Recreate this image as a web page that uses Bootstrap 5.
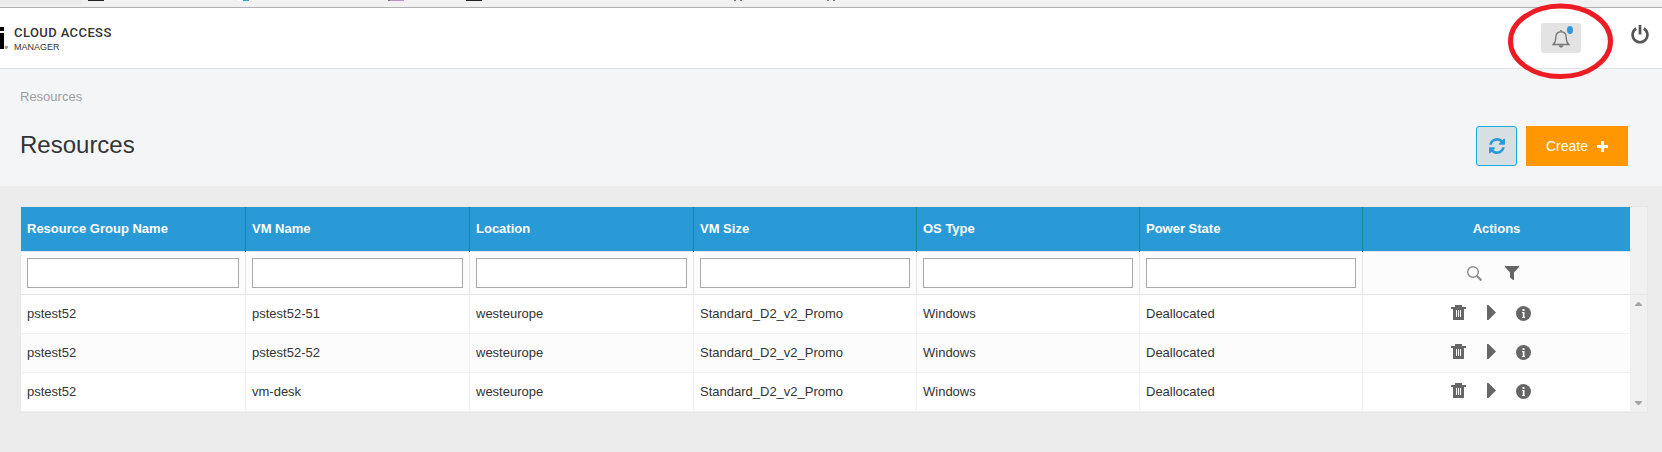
<!DOCTYPE html>
<html lang="en">
<head>
<meta charset="utf-8">
<title>Cloud Access Manager - Resources</title>
<meta name="viewport" content="width=device-width, initial-scale=1">
<link href="https://cdn.jsdelivr.net/npm/bootstrap@5.3.0/dist/css/bootstrap.min.css" rel="stylesheet">
<style>
body{font-family:"Liberation Sans",Arial,sans-serif;font-size:13px;line-height:18px;color:#333;background:#ececec;overflow:hidden}
svg{display:block;flex:none}
.browser-edge{height:8px;background:#f1f1f1;border-bottom:1px solid #b0b0b0}
.topbar{height:61px;border-bottom:1px solid #e2e2e2}
.brand-name{font:500 13px/16px Roboto,sans-serif;letter-spacing:.4px;color:#333;margin-top:17px}
.brand-sub{font-size:9px;line-height:12px;color:#333}
.bell-btn{width:40px;height:30px;background:#e3e3e3;border-radius:3px;margin:15px 50px 0 0;padding:0;border:0}
.bell-dot{left:26px;top:3px;width:6px;height:8px;border-radius:50%;background:#3498db}
.callout-ring{left:-35px;top:-20px;pointer-events:none}
.page-head{height:117px;background:#f3f5f7;padding:19px 34px 0 20px}
.crumb{color:#9b9fa3}
.page-title{font-size:24px;line-height:28px;font-weight:400;margin:0;padding-bottom:2px}
.btn-refresh{width:41px;height:40px;background:#d8dfe2;border:1px solid #13aee0;border-radius:3px;padding:0}
.btn-create{width:102px;height:40px;background:#ff9800;border:0;border-radius:0;color:#fff;font-size:14px;line-height:20px;padding:0 20px}
.grid-box{margin:20px 14px 0 20px;border:1px solid #e7e7e7;}
.vm-grid{width:1609px;table-layout:fixed;border-collapse:separate;border-spacing:0}
.vm-grid th,.vm-grid td{padding:0 6px;vertical-align:middle}
.vm-grid th{height:45px;padding-bottom:2px;background:#2a9ad6;color:#fff;font-weight:700;border-right:1px solid #16898c;box-shadow:inset 0 -1px #e6e6e6}
.vm-grid td{height:39px;background:#fff;border-right:1px solid #f1f1f1;border-bottom:1px solid #f1f1f1}
.vm-grid tbody td:last-child{padding-bottom:2px}
.vm-grid .filters td{height:43px;background:#fcfcfc;border-color:#e6e6e6}
.vm-grid .alt td{background:#fcfcfc}
.vm-grid tr>:last-child{border-right:0}
.filter-input{display:block;width:100%;height:30px;border:1px solid #a9a9a9;border-radius:0;background:#fff}
.scroll-col{width:17px;background:#f0f0f0}
.scroll-top{height:88px;border-bottom:1px solid #e6e6e6}
</style>
</head>
<body>
<svg class="d-none">
  <symbol id="i-trash" viewBox="0 0 15 15"><path fill="#666" d="M4 0h7v2h4v2h-2v11H2V4H0V2h4z"/><path fill="#fff" d="M5 5h1v7H5zM7 5h1v7H7zM9 5h1v7H9z"/></symbol>
  <symbol id="i-play" viewBox="0 0 9 15"><path fill="#666" d="M0 0h1.5L9 7.5 1.5 15H0z"/></symbol>
  <symbol id="i-info" viewBox="0 0 15 15"><circle cx="7.5" cy="7.5" r="7.5" fill="#666"/><path fill="#fff" d="M6.500 3h2v2h-2zM6 6h2.500v5H9v1H6v-1h.8V7H6z"/></symbol>
</svg>

<div class="browser-edge">
  <svg width="1662" height="7"><path fill="#ebebeb" d="M0 0h82v5H0z"/><path fill="#222" d="M88 0h16v1H88zM466 0h16v1h-16z"/><path fill="#fff" d="M238 0h16v1h-16z"/><path fill="#2d9fdc" d="M243 0h6v1h-6z"/><path fill="#ba92c6" d="M388 0h16v1h-16z"/><path fill="#777" d="M388 0h2v1h-2zM734 0h2v1h-2zM740 0h2v1h-2zM827 0h2v1h-2zM833 0h2v1h-2z"/></svg>
</div>

<header class="topbar bg-white d-flex align-items-start">
  <svg width="14" height="50"><path d="M0 19h4v4H0zM0 25h4v16H0z"/><circle cx="6.3" cy="39.3" r="1.3" fill="#aaa" stroke="#777" stroke-width=".6"/></svg>
  <div>
    <div class="brand-name">CLOUD ACCESS</div>
    <div class="brand-sub">MANAGER</div>
  </div>
  <button class="bell-btn position-relative ms-auto" aria-label="Notifications">
    <svg class="mx-auto" width="18" height="19" viewBox="0 0 18 20" fill="none" stroke="#777" stroke-width="1.4"><path d="M.8 16.300C3.300 14 3.600 11.500 3.600 8.500 3.600 5.200 5.800 3 9 3s5.400 2.200 5.400 5.500c0 3 .3 5.500 2.800 7.800z"/><path fill="#777" stroke="none" d="M8.200 1h1.600v2H8.200zM6.500 17h5c-.3 1.500-1.300 2.500-2.500 2.500S6.800 18.500 6.500 17z"/></svg>
    <span class="bell-dot position-absolute"></span>
    <svg class="callout-ring position-absolute" width="110" height="80" viewBox="0 0 110 80"><ellipse cx="54.500" cy="38.300" rx="50" ry="35.200" fill="none" stroke="#ed1c24" stroke-width="5"/></svg>
  </button>
  <svg style="margin:17px 13px 0 0" width="18" height="19" viewBox="0 0 18 19" fill="none" stroke="#555" stroke-width="2.700"><path d="M5.200 3.500a7.400 7.400 0 1 0 7.600 0M9 0v9.500"/></svg>
</header>

<main>
  <section class="page-head">
    <div class="crumb">Resources</div>
    <div class="d-flex align-items-center" style="margin-top:20px">
      <h1 class="page-title me-auto">Resources</h1>
      <button class="btn-refresh d-flex align-items-center justify-content-center" style="margin-right:9px" aria-label="Refresh">
        <svg width="16" height="16" viewBox="0 0 1536 1536" fill="#2a9ad6"><path d="M1511 928q0 5-1 7-64 268-268 434.500t-478 166.500q-146 0-282.500-55t-243.500-157l-129 129q-19 19-45 19t-45-19-19-45v-448q0-26 19-45t45-19h448q26 0 45 19t19 45-19 45l-137 137q71 66 161 102t187 36q134 0 250-65t186-179q11-17 53-117 8-23 30-23h192q13 0 22.500 9.500t9.500 22.500zm25-800v448q0 26-19 45t-45 19h-448q-26 0-45-19t-19-45 19-45l138-138q-148-137-349-137-134 0-250 65t-186 179q-11 17-53 117-8 23-30 23h-199q-13 0-22.500-9.500t-9.500-22.500v-7q65-268 270-434.500t480-166.500q146 0 284 55.500t245 156.500l130-129q19-19 45-19t45 19 19 45z"/></svg>
      </button>
      <button class="btn-create d-flex align-items-center justify-content-between"><span>Create</span>
        <svg width="11" height="11"><path fill="#fff" d="M4 0h3v4h4v3H7v4H4V7H0V4h4z"/></svg>
      </button>
    </div>
  </section>

  <div class="grid-box d-flex">
    <table class="vm-grid">
      <colgroup><col style="width:225px"><col style="width:224px"><col style="width:224px"><col style="width:223px"><col style="width:223px"><col style="width:223px"><col style="width:267px"></colgroup>
      <thead>
        <tr><th>Resource Group Name</th><th>VM Name</th><th>Location</th><th>VM Size</th><th>OS Type</th><th>Power State</th><th class="text-center">Actions</th></tr>
        <tr class="filters">
          <td><input class="filter-input"></td><td><input class="filter-input"></td><td><input class="filter-input"></td><td><input class="filter-input"></td><td><input class="filter-input"></td><td><input class="filter-input"></td>
          <td><div class="d-flex" style="padding-left:98px;gap:23px">
            <svg width="15" height="15" fill="none" stroke="#8a8a8a"><circle cx="6" cy="6" r="5.300" stroke-width="1.400"/><path d="M10 10l4.500 4.500" stroke-width="2.200"/></svg>
            <svg width="14" height="15"><path fill="#666" d="M0 0h14v1L9 6.500V14H8L5 11.500v-5L0 1z"/></svg></div></td>
        </tr>
      </thead>
      <tbody id="vm-rows"></tbody>
    </table>
    <div class="scroll-col d-flex flex-column align-items-center">
      <div class="scroll-top w-100"></div>
      <svg style="margin-top:7px" width="7" height="4"><path fill="#a3a3a3" d="M3 0h1l3 3v1H0V3z"/></svg>
      <svg class="mt-auto" style="margin-bottom:7px" width="7" height="4"><path fill="#a3a3a3" d="M0 0h7v1L4 4H3L0 1z"/></svg>
    </div>
  </div>
</main>
<script>
document.getElementById('vm-rows').innerHTML = ['pstest52-51', 'pstest52-52', 'vm-desk'].map((vm, i) =>
  `<tr class="${i % 2 ? 'alt' : ''}"><td>pstest52</td><td>${vm}</td><td>westeurope</td><td>Standard_D2_v2_Promo</td><td>Windows</td><td>Deallocated</td>
  <td><div class="d-flex" style="padding-left:82px">
    <svg width="15" height="16"><use href="#i-trash" width="15" height="15"/></svg>
    <svg style="margin:0 20px 0 21px" width="9" height="16"><use href="#i-play" width="9" height="15"/></svg>
    <svg width="15" height="16"><use href="#i-info" y="1" width="15" height="15"/></svg>
  </div></td></tr>`).join('');
</script>
<script src="https://cdn.jsdelivr.net/npm/bootstrap@5.3.0/dist/js/bootstrap.bundle.min.js"></script>
</body>
</html>
